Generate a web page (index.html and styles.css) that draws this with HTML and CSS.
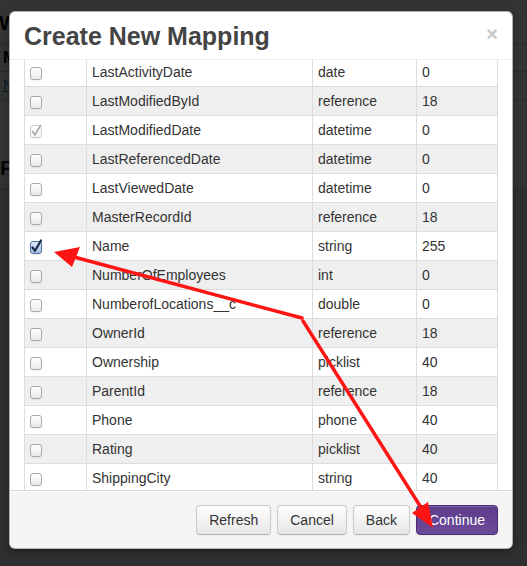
FILE: index.html
```html
<!DOCTYPE html>
<html lang="en">
<head>
<meta charset="utf-8">
<title>Create New Mapping</title>
<link rel="stylesheet" href="styles.css">
</head>
<body>
<div class="page">
  <div class="page-title">Welcome</div>
  <div class="page-row bold">Mappings</div>
  <div class="page-row"><a href="#">New Mapping</a></div>
  <div class="page-section">Fields</div>
  <div class="page-rest"></div>
</div>
<div class="backdrop"></div>
<div class="modal">
  <div class="modal-header">
    <h3>Create New Mapping</h3>
    <span class="close">&times;</span>
  </div>
  <div class="modal-body">
    <table class="fields">
      <colgroup><col class="c-check"><col class="c-name"><col class="c-type"><col class="c-len"></colgroup>
      <tbody>
        <tr><td><span class="cb"></span></td><td>LastActivityDate</td><td>date</td><td>0</td></tr>
        <tr><td><span class="cb"></span></td><td>LastModifiedById</td><td>reference</td><td>18</td></tr>
        <tr><td><span class="cb disabled"><svg viewBox="0 0 12 13" class="tick"><path d="M2.5 6.5 L5 9.8 L10.5 0.5"/></svg></span></td><td>LastModifiedDate</td><td>datetime</td><td>0</td></tr>
        <tr><td><span class="cb"></span></td><td>LastReferencedDate</td><td>datetime</td><td>0</td></tr>
        <tr><td><span class="cb"></span></td><td>LastViewedDate</td><td>datetime</td><td>0</td></tr>
        <tr><td><span class="cb"></span></td><td>MasterRecordId</td><td>reference</td><td>18</td></tr>
        <tr><td><span class="cb checked"><svg viewBox="0 0 12 13" class="tick"><path d="M2.5 6.5 L5 9.8 L11 -0.5"/></svg></span></td><td>Name</td><td>string</td><td>255</td></tr>
        <tr><td><span class="cb"></span></td><td>NumberOfEmployees</td><td>int</td><td>0</td></tr>
        <tr><td><span class="cb"></span></td><td>NumberofLocations__c</td><td>double</td><td>0</td></tr>
        <tr><td><span class="cb"></span></td><td>OwnerId</td><td>reference</td><td>18</td></tr>
        <tr><td><span class="cb"></span></td><td>Ownership</td><td>picklist</td><td>40</td></tr>
        <tr><td><span class="cb"></span></td><td>ParentId</td><td>reference</td><td>18</td></tr>
        <tr><td><span class="cb"></span></td><td>Phone</td><td>phone</td><td>40</td></tr>
        <tr><td><span class="cb"></span></td><td>Rating</td><td>picklist</td><td>40</td></tr>
        <tr><td><span class="cb"></span></td><td>ShippingCity</td><td>string</td><td>40</td></tr>
      </tbody>
    </table>
  </div>
  <div class="modal-footer">
    <button class="btn">Refresh</button>
    <button class="btn">Cancel</button>
    <button class="btn">Back</button>
    <button class="btn btn-primary">Continue</button>
  </div>
</div>
<svg class="annot" viewBox="0 0 527 566" width="527" height="566">
  <g stroke="#ff1414" stroke-width="3.4" stroke-linecap="round" fill="none">
    <line x1="302" y1="318" x2="74" y2="257"/>
    <line x1="303" y1="321" x2="422" y2="509"/>
  </g>
  <g fill="#ff1414">
    <polygon points="54,252 80,247 72,267"/>
    <polygon points="433,528 428,502 412,513"/>
  </g>
</svg>
</body>
</html>
```

FILE: styles.css
```css
* { box-sizing: border-box; }
html, body { margin: 0; padding: 0; }
body {
  width: 527px;
  height: 566px;
  overflow: hidden;
  position: relative;
  background: #ffffff;
  font-family: "Liberation Sans", Arial, Helvetica, sans-serif;
}

/* background page (dimmed) */
.page { color: #000; padding-left: 0; }
.page-title {
  height: 44px;
  border-bottom: 1px solid #d8d8d8;
  font-weight: bold;
  font-size: 20px;
  line-height: 24px;
  padding-top: 11px;
  margin-left: -1px;
}
.page-row {
  height: 28px;
  line-height: 27px;
  border-bottom: 1px solid #d8d8d8;
  font-size: 14px;
  padding-left: 3px;
}
.page-row + .page-row { height: 29px; }
.page-row.bold { font-weight: bold; font-size: 16px; }
.page-row a { color: #0088cc; text-decoration: underline; }
.page-section {
  height: 88px;
  border-bottom: 1px solid #d0d0d0;
  font-size: 21px;
  font-weight: bold;
  line-height: 24px;
  padding-top: 55px;
  color: #222;
}
.page-rest { height: 400px; background: #ececec; }

.backdrop {
  position: absolute;
  inset: 0;
  background: rgba(0, 0, 0, 0.8);
}

/* modal */
.modal {
  position: absolute;
  left: 9px;
  top: 11px;
  width: 504px;
  height: 538px;
  background: #fff;
  border: 1px solid rgba(0, 0, 0, 0.3);
  border-radius: 6px;
  box-shadow: 0 3px 7px rgba(0, 0, 0, 0.3);
  display: flex;
  flex-direction: column;
  overflow: hidden;
}
.modal-header {
  height: 48px;
  flex: none;
  border-bottom: 1px solid #eeeeee;
  padding: 9px 14px 0 14px;
  display: flex;
  justify-content: space-between;
  align-items: flex-start;
}
.modal-header h3 {
  margin: 0;
  font-size: 25px;
  line-height: 30px;
  font-weight: bold;
  color: #444444;
}
.close {
  margin-top: 3px;
  font-size: 20px;
  line-height: 20px;
  font-weight: bold;
  color: #c8c8c8;
}
.modal-body {
  height: 430px;
  flex: none;
  overflow: hidden;
  padding: 0 15px 0 14px;
}
.fields {
  width: 473px;
  table-layout: fixed;
  border-collapse: collapse;
  margin-top: -3px;
  font-size: 14px;
  line-height: 20px;
  color: #333;
}
.c-check { width: 62px; }
.c-name { width: 226px; }
.c-type { width: 104px; }
.c-len { width: 81px; }
.fields td {
  border: 1px solid #dddddd;
  padding: 4px 5px;
  white-space: nowrap;
  overflow: hidden;
}
.fields tr:nth-child(even) td { background: #efefef; }

.cb {
  display: inline-block;
  position: relative;
  width: 12px;
  height: 13px;
  border: 1px solid #a9a9a9;
  border-radius: 3px;
  background: linear-gradient(#ffffff, #e9e9e9);
  vertical-align: middle;
  box-shadow: 0 1px 1px rgba(0, 0, 0, 0.06);
}
.cb .tick {
  position: absolute;
  left: -1px;
  top: -1px;
  width: 12px;
  height: 13px;
  overflow: visible;
}
.cb .tick path { fill: none; stroke-width: 2; stroke-linecap: round; stroke-linejoin: round; }
.cb.disabled { border-color: #cfcfcf; background: linear-gradient(#ffffff, #f2f2f2); }
.cb.disabled .tick path { stroke: #a8a8a8; stroke-width: 1.6; }
.cb.checked { border-color: #4c6d9e; background: linear-gradient(#dde8f6, #a6bfe2); }
.cb.checked .tick path { stroke: #18294a; stroke-width: 2.2; }

.modal-footer {
  flex: none;
  height: 58px;
  border-top: 1px solid #dddddd;
  background: #f5f5f5;
  box-shadow: inset 0 1px 0 #ffffff;
  padding: 14px 14px 0 14px;
  display: flex;
  justify-content: flex-end;
  align-items: flex-start;
  gap: 6px;
}
.btn {
  font-family: "Liberation Sans", Arial, Helvetica, sans-serif;
  font-size: 14px;
  line-height: 20px;
  height: 30px;
  padding: 4px 12px;
  color: #333;
  background: linear-gradient(#ffffff, #e6e6e6);
  border: 1px solid #c9c9c9;
  border-bottom-color: #b3b3b3;
  border-radius: 4px;
  box-shadow: inset 0 1px 0 rgba(255, 255, 255, 0.2), 0 1px 2px rgba(0, 0, 0, 0.05);
  margin: 0;
}
.btn-primary {
  color: #fff;
  background: linear-gradient(#5d3c8c, #6a4a99);
  border-color: #4a2c78;
}

.annot {
  position: absolute;
  left: 0;
  top: 0;
  pointer-events: none;
}
```
